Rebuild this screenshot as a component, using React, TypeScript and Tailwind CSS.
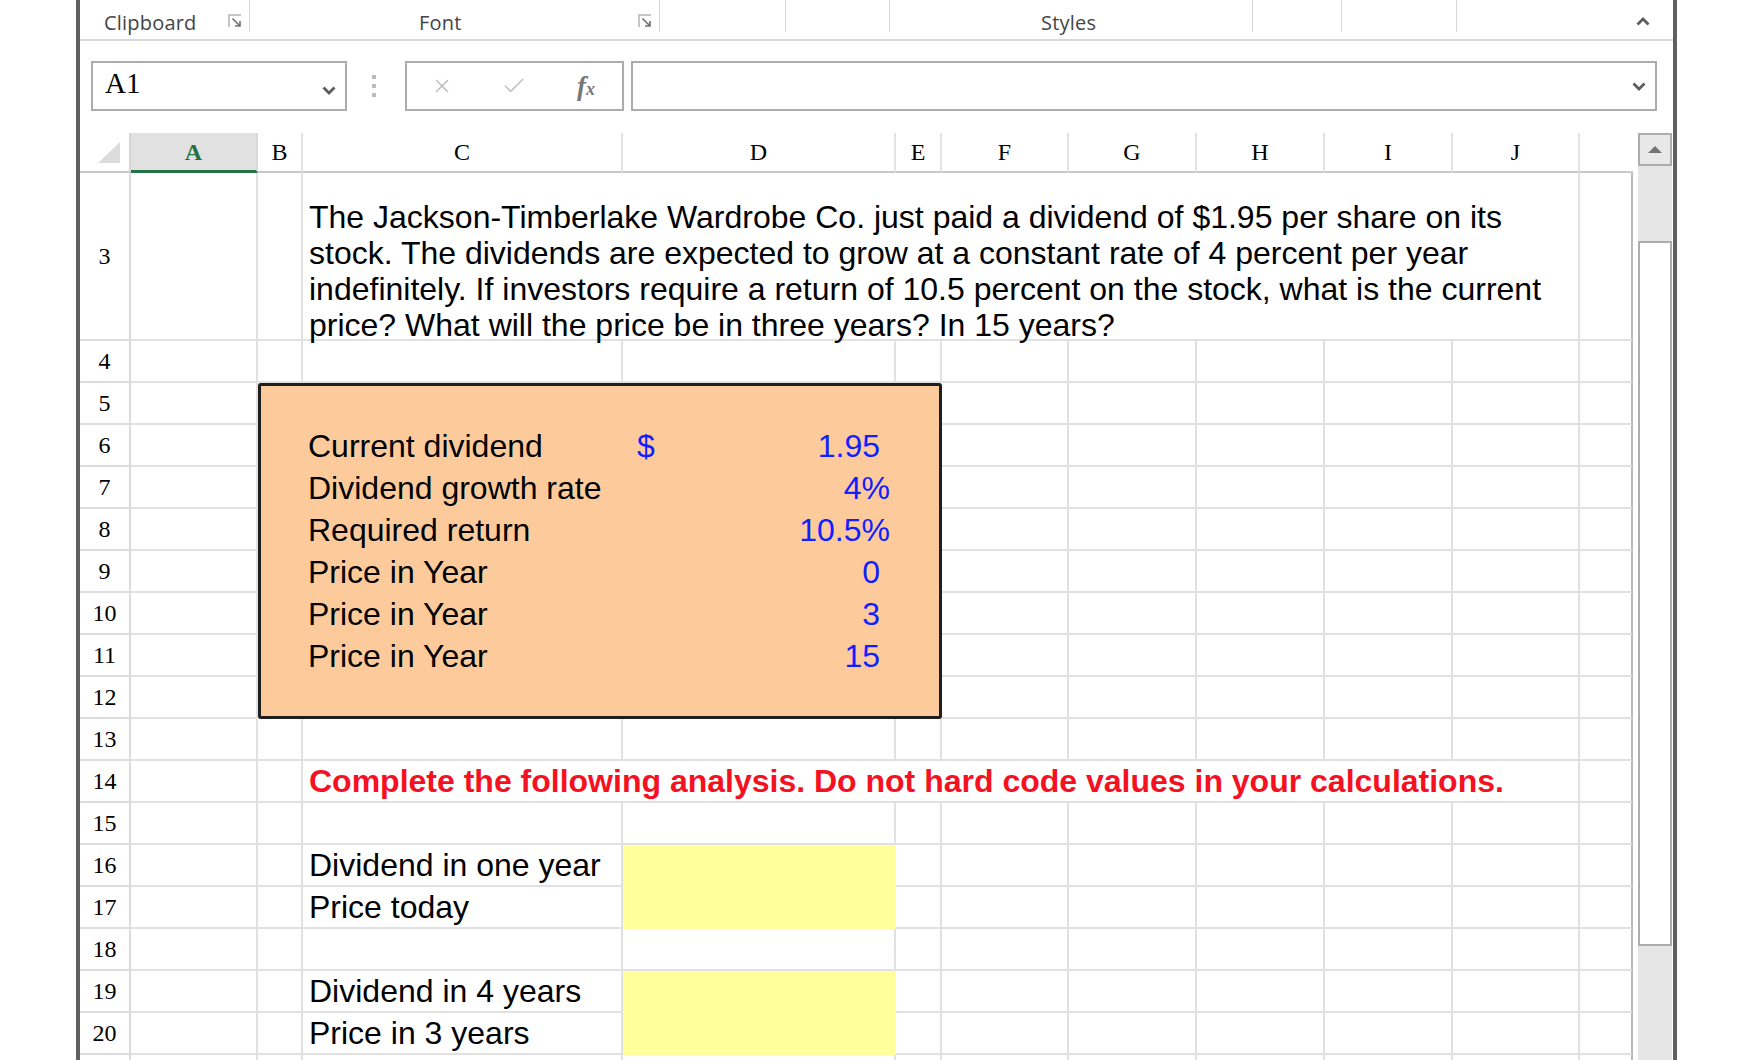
import { X, Check } from 'lucide-react';

const ARIAL = "font-['Liberation_Sans',Arial,sans-serif]";
const SERIF = "font-['Liberation_Serif','Times_New_Roman',serif]";
const UI = "font-['Open_Sans','Noto_Sans',sans-serif]";
const LETTERS = ['A', 'B', 'C', 'D', 'E', 'F', 'G', 'H', 'I', 'J', 'K'];

const RIBBON = [
    { w: 'w-[170px]', label: 'Clipboard', pl: 'pl-[24px]', launcher: true },
    { w: 'w-[410px]', label: 'Font', pl: 'pl-[169px]', launcher: true },
    { w: 'w-[126px]' },
    { w: 'w-[104px]' },
    { w: 'w-[363px]', label: 'Styles', pl: 'pl-[151px]' },
    { w: 'w-[89px]' },
    { w: 'w-[115px]' },
];

const BOX_ROWS = [
    { label: 'Current dividend', value: '1.95', dollar: true },
    { label: 'Dividend growth rate', value: '4%', pct: true },
    { label: 'Required return', value: '10.5%', pct: true },
    { label: 'Price in Year', value: '0' },
    { label: 'Price in Year', value: '3' },
    { label: 'Price in Year', value: '15' },
];

function Launcher() {
    return (
        <svg width="14" height="14" viewBox="0 0 14 14">
            <path d="M1 13V1h12" fill="none" stroke="#b4b4b4" strokeWidth="1.5" />
            <path d="M4.5 4.5l7 7M12 7v5H7" fill="none" stroke="#707070" strokeWidth="1.6" />
        </svg>
    );
}

function Chevron({ up }: { up?: boolean }) {
    return (
        <svg width="14" height="9" viewBox="0 0 14 9">
            <path
                d={up ? 'M1.5 7.5 7 2l5.5 5.5' : 'M1.5 1.5 7 7l5.5-5.5'}
                fill="none"
                stroke="#5c5c5c"
                strokeWidth="2.8"
            />
        </svg>
    );
}

function Blank({ col }: { col: string }) {
    if (col === 'K') {
        return <div className="border-b-2 border-r-2 border-b-[#e1e1e1] border-r-[#b8b8b8]" />;
    }
    return <div className="border-b-2 border-r-2 border-[#e1e1e1]" />;
}

function Blanks({ cols }: { cols: string[] }) {
    return (
        <>
            {cols.map((c) => (
                <Blank key={c} col={c} />
            ))}
        </>
    );
}

function RowNum({ n }: { n?: number }) {
    return (
        <div className={`flex items-center justify-center border-b-2 border-r-2 border-[#dcdcdc] text-[24px] text-black ${SERIF}`}>
            {n}
        </div>
    );
}

function Label({ text }: { text: string }) {
    return (
        <div className="flex items-center border-b-2 border-r-2 border-[#e1e1e1] pl-[6px] text-[32px] text-black whitespace-nowrap">
            {text}
        </div>
    );
}

export default function App() {
    const all = LETTERS;
    const fromF = LETTERS.slice(5);
    const fromE = LETTERS.slice(4);

    return (
        <div className="h-[1060px] w-[1744px] overflow-hidden bg-white">
            <div className="ml-[76px] flex h-full w-[1601px] flex-col border-x-4 border-[#5f5f5f]">
                {/* Ribbon group labels */}
                <div className={`flex h-[41px] items-start border-b-2 border-[#d7d7d7] text-[20px] text-[#444] ${UI}`}>
                    {RIBBON.map((g, i) => (
                        <div key={i} className={`flex h-[32px] items-end border-r border-[#d6d6d6] ${g.w} ${g.pl ?? ''}`}>
                            {g.label && <span className="mb-[-2px] leading-[22px] tracking-[0.2px]">{g.label}</span>}
                            {g.launcher && (
                                <span className="mb-[4px] ml-auto mr-[7px]">
                                    <Launcher />
                                </span>
                            )}
                        </div>
                    ))}
                    <div className="flex h-[39px] flex-1 items-center justify-end pr-[23px] pt-[4px]">
                        <Chevron up />
                    </div>
                </div>

                {/* Formula bar */}
                <div className="mt-[20px] flex h-[50px] items-stretch">
                    <div className="ml-[11px] flex w-[256px] items-center border-2 border-[#acacac] pl-[12px] pr-[9px]">
                        <span className={`-mt-[4px] text-[29px] text-black ${SERIF}`}>A1</span>
                        <span className="ml-auto mt-[8px]">
                            <Chevron />
                        </span>
                    </div>
                    <div className="ml-[25px] flex flex-col justify-center gap-[5px]">
                        {[0, 1, 2].map((i) => (
                            <div key={i} className="h-[4px] w-[4px] bg-[#bcbcbc]" />
                        ))}
                    </div>
                    <div className="ml-[29px] flex w-[219px] items-center border-2 border-[#acacac]">
                        <X size={22} strokeWidth={1.6} className="ml-[24px] text-[#bdbdbd]" />
                        <Check size={26} strokeWidth={1.6} className="ml-[48px] text-[#c4c4c4]" />
                        <span className={`ml-[50px] text-[27px] font-semibold italic text-[#777] ${SERIF}`}>
                            f<span className="text-[18px]">x</span>
                        </span>
                    </div>
                    <div className="ml-[7px] flex w-[1026px] items-center justify-end border-2 border-[#acacac] pr-[9px]">
                        <Chevron />
                    </div>
                </div>

                {/* Sheet */}
                <div className="mt-[22px] flex min-h-0 flex-1">
                    <div
                        className={`grid w-[1553px] grid-cols-[51px_127px_45px_320px_273px_46px_127px_128px_128px_128px_127px_53px] grid-rows-[40px_168px_repeat(18,42px)] ${ARIAL}`}
                    >
                        {/* Column headers */}
                        <div className="flex items-end justify-end border-b-2 border-r-2 border-b-[#c8c8c8] border-r-[#d6d6d6] pb-[8px] pr-[9px]">
                            <svg width="22" height="21" viewBox="0 0 22 21">
                                <polygon points="22,0 22,21 0,21" fill="#dcdcdc" />
                            </svg>
                        </div>
                        {LETTERS.map((l) =>
                            l === 'A' ? (
                                <div
                                    key={l}
                                    className={`flex items-center justify-center border-b-[3px] border-r-2 border-b-[#217346] border-r-[#d9d9d9] bg-[#e1e1e1] text-[24px] font-bold text-[#217346] ${SERIF}`}
                                >
                                    A
                                </div>
                            ) : (
                                <div
                                    key={l}
                                    className={`flex items-center justify-center border-b-2 border-b-[#c8c8c8] text-[24px] text-black ${SERIF} ${
                                        l === 'K' ? '' : 'border-r-2 border-r-[#e3e3e3]'
                                    }`}
                                >
                                    {l === 'K' ? '' : l}
                                </div>
                            )
                        )}

                        {/* Row 3 */}
                        <RowNum n={3} />
                        <Blanks cols={['A', 'B']} />
                        <div className="col-span-8 flex flex-col border-b-2 border-r-2 border-[#e1e1e1] pl-[6px] pt-[26px] text-[32px] leading-[36px] text-black">
                            <span className="whitespace-nowrap">The Jackson-Timberlake Wardrobe Co. just paid a dividend of $1.95 per share on its</span>
                            <span className="whitespace-nowrap">stock. The dividends are expected to grow at a constant rate of 4 percent per year</span>
                            <span className="whitespace-nowrap">indefinitely. If investors require a return of 10.5 percent on the stock, what is the current</span>
                            <span className="whitespace-nowrap">price? What will the price be in three years? In 15 years?</span>
                        </div>
                        <Blank col="K" />

                        {/* Row 4 */}
                        <RowNum n={4} />
                        <Blanks cols={all} />

                        {/* Row 5 with input box */}
                        <RowNum n={5} />
                        <Blank col="A" />
                        <div className="col-span-4 row-span-8 flex flex-col rounded-[3px] bg-[#fdcb9b] shadow-[inset_0_0_0_3px_#1e1e1e]">
                            <div className="h-[42px]" />
                            {BOX_ROWS.map((r, i) => (
                                <div key={i} className="flex h-[42px] items-center text-[32px]">
                                    <div className="w-[45px]" />
                                    <div className="w-[320px] whitespace-nowrap pl-[5px] text-black">{r.label}</div>
                                    <div className="flex w-[273px] items-center text-[#1020ff]">
                                        {r.dollar && <span className="pl-[14px]">$</span>}
                                        <span className={`ml-auto ${r.pct ? 'pr-[6px]' : 'pr-[16px]'}`}>{r.value}</span>
                                    </div>
                                </div>
                            ))}
                        </div>
                        <Blanks cols={fromF} />

                        {[6, 7, 8, 9, 10, 11, 12].map((n) => (
                            <div key={n} className="contents">
                                <RowNum n={n} />
                                <Blank col="A" />
                                <Blanks cols={fromF} />
                            </div>
                        ))}

                        {/* Row 13 */}
                        <RowNum n={13} />
                        <Blanks cols={all} />

                        {/* Row 14 */}
                        <RowNum n={14} />
                        <Blanks cols={['A', 'B']} />
                        <div className="col-span-8 flex items-center whitespace-nowrap border-b-2 border-r-2 border-[#e1e1e1] pl-[6px] text-[32px] font-bold text-[#f5111f]">
                            Complete the following analysis. Do not hard code values in your calculations.
                        </div>
                        <Blank col="K" />

                        {/* Row 15 */}
                        <RowNum n={15} />
                        <Blanks cols={all} />

                        {/* Rows 16-17 */}
                        <RowNum n={16} />
                        <Blanks cols={['A', 'B']} />
                        <Label text="Dividend in one year" />
                        <div className="row-span-2 bg-[#ffff9b]" />
                        <Blanks cols={fromE} />
                        <RowNum n={17} />
                        <Blanks cols={['A', 'B']} />
                        <Label text="Price today" />
                        <Blanks cols={fromE} />

                        {/* Row 18 */}
                        <RowNum n={18} />
                        <Blanks cols={all} />

                        {/* Rows 19-20 */}
                        <RowNum n={19} />
                        <Blanks cols={['A', 'B']} />
                        <Label text="Dividend in 4 years" />
                        <div className="row-span-2 bg-[#ffff9b]" />
                        <Blanks cols={fromE} />
                        <RowNum n={20} />
                        <Blanks cols={['A', 'B']} />
                        <Label text="Price in 3 years" />
                        <Blanks cols={fromE} />

                        {/* Row 21, only its top edge is on screen */}
                        <RowNum />
                        <Blanks cols={all} />
                    </div>

                    {/* Vertical scrollbar */}
                    <div className="ml-[5px] flex w-[34px] flex-col">
                        <div className="flex h-[33px] items-center justify-center border-2 border-[#adadad] bg-[#e8e8e8]">
                            <svg width="14" height="7" viewBox="0 0 14 7">
                                <polygon points="0,7 7,0 14,7" fill="#737373" />
                            </svg>
                        </div>
                        <div className="h-[75px] bg-[#e6e6e6]" />
                        <div className="h-[705px] border-2 border-[#adadad] bg-white" />
                        <div className="flex-1 bg-[#e6e6e6]" />
                    </div>
                </div>
            </div>
        </div>
    );
}
